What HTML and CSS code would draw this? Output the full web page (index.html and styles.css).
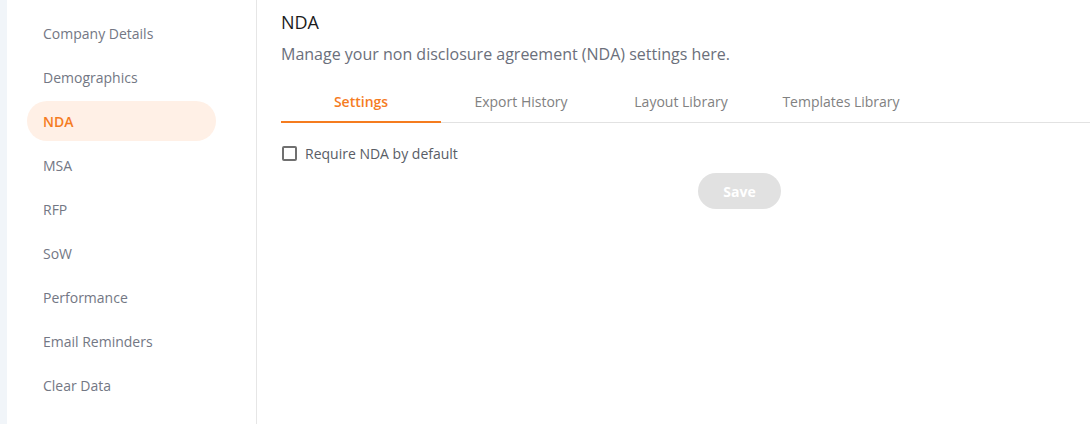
FILE: index.html
```html
<!DOCTYPE html>
<html>
<head>
<meta charset="utf-8">
<link rel="stylesheet" href="styles.css">
</head>
<body>
<div class="app">
  <div class="strip"></div>
  <nav class="sidebar">
    <a class="nav-item">Company Details</a>
    <a class="nav-item">Demographics</a>
    <a class="nav-item active">NDA</a>
    <a class="nav-item">MSA</a>
    <a class="nav-item">RFP</a>
    <a class="nav-item">SoW</a>
    <a class="nav-item">Performance</a>
    <a class="nav-item">Email Reminders</a>
    <a class="nav-item">Clear Data</a>
  </nav>
  <main class="main">
    <h1 class="title">NDA</h1>
    <p class="subtitle">Manage your non disclosure agreement (NDA) settings here.</p>
    <div class="tabs">
      <div class="tab active">Settings</div>
      <div class="tab">Export History</div>
      <div class="tab">Layout Library</div>
      <div class="tab">Templates Library</div>
    </div>
    <label class="check-row">
      <span class="checkbox"></span>
      <span class="check-label">Require NDA by default</span>
    </label>
    <div class="actions">
      <button class="save">Save</button>
    </div>
  </main>
</div>
</body>
</html>
```
FILE: styles.css
```css
* { box-sizing: border-box; }
html, body { margin: 0; padding: 0; background: #fff; }
body { font-family: "Open Sans", "Liberation Sans", sans-serif; width: 1090px; height: 424px; overflow: hidden; }
.app { display: flex; height: 424px; }
.strip { width: 7px; background: #f1f5f9; flex: none; }
.sidebar {
  width: 250px; flex: none; border-right: 1px solid #e6e6e6;
  padding-top: 11px; display: flex; flex-direction: column;
}
.nav-item {
  height: 44px; display: flex; align-items: center;
  font-size: 14px; color: #737784; padding-left: 36px;
}
.nav-item.active {
  margin: 2px 0 2px 20px; height: 40px; width: 189px; padding-left: 16px;
  background: #fff0e6; border-radius: 20px; color: #f57c1f; font-weight: 600;
}
.main { flex: 1; min-width: 0; padding-left: 24px; padding-top: 10px; }
.title { margin: 0; font-size: 18px; font-weight: 400; line-height: 24px; color: #1b1b1b; }
.subtitle { margin: 8px 0 0; font-size: 16px; line-height: 24px; color: #6b6f7b; }
.tabs { display: flex; margin-top: 24px; border-bottom: 1px solid #e2e2e2; height: 33px; }
.tab {
  width: 160px; text-align: center; font-size: 14px; line-height: 20px;
  padding-top: 2px; color: #818181;
}
.tab.active { color: #f57c1f; font-weight: 600; border-bottom: 2px solid #f57c1f; margin-bottom: -1px; }
.check-row { display: flex; align-items: center; margin-top: 20px; height: 20px; }
.checkbox {
  width: 15px; height: 15px; border: 2px solid #707070; border-radius: 2px; margin-left: 1px;
}
.check-label { margin-left: 8px; font-size: 14px; color: #595d66; }
.actions { display: flex; padding-left: 417px; margin-top: 10px; }
.save {
  width: 83px; height: 36px; border: none; border-radius: 18px; background: #e1e1e1;
  color: #fff; font-family: inherit; font-size: 14px; font-weight: 700;
}
```
